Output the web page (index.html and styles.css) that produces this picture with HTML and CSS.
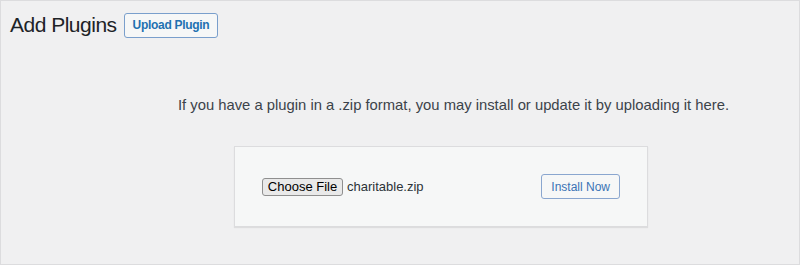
FILE: index.html
```html
<!DOCTYPE html>
<html lang="en">
  <head>
    <meta charset="UTF-8" />
    <meta name="viewport" content="width=device-width, initial-scale=1.0" />
    <title>Add Plugins</title>
    <link rel="stylesheet" href="styles.css">
  </head>
  <body>
    <div class="wrap">
      <!-- page title -->
      <div class="page-head">
        <h1 class="page-title">Add Plugins</h1>
        <button type="button" class="btn btn-strong">Upload Plugin</button>
      </div>
      <!-- upload box -->
      <div class="upload-plugin">
        <p class="install-help">If you have a plugin in a .zip format, you may install or update it by uploading it here.</p>
        <form class="upload-form">
          <div class="file-field">
            <button type="button" class="file-btn">Choose File</button>
            <span class="file-name">charitable.zip</span>
          </div>
          <button type="button" class="btn">Install Now</button>
        </form>
      </div>
    </div>
  </body>
</html>
```

FILE: styles.css
```css
body {
  margin: 0;
  font-family: "Liberation Sans", Arial, sans-serif;
  color: #3c434a;
}

.wrap {
  box-sizing: border-box;
  width: 800px;
  height: 265px;
  border: 1px solid #dcdcde;
  background-color: #f0f0f1;
  padding-top: 9px;
}

/* title row */
.page-head {
  display: flex;
  align-items: center;
  gap: 7px;
  padding-left: 9px;
}

.page-title {
  margin: 0;
  font-size: 21px;
  font-weight: 400;
  letter-spacing: -0.5px;
  line-height: 30px;
  color: #1d2327;
}

.btn {
  box-sizing: border-box;
  height: 25px;
  padding: 0 9px;
  font-family: inherit;
  font-size: 12px;
  color: #3a73b5;
  background-color: #f6f7f7;
  border: 1px solid #8aa6cf;
  border-radius: 3px;
}

.btn-strong {
  padding: 0 8px;
  font-weight: 600;
  letter-spacing: -0.3px;
  color: #2271b1;
  border-color: #7a9fcc;
}

/* upload section */
.upload-plugin {
  margin-top: 55px;
}

.install-help {
  margin: 0 0 0 107px;
  font-size: 14.8px;
  line-height: 20px;
  text-align: center;
}

.upload-form {
  box-sizing: border-box;
  width: 414px;
  margin: 31px 0 0 233px;
  padding: 27px;
  display: flex;
  justify-content: space-between;
  align-items: center;
  background-color: #f6f7f7;
  border: 1px solid #dcdcde;
  box-shadow: 0 1px 1px rgba(0, 0, 0, 0.08);
}

.file-field {
  display: flex;
  align-items: center;
  gap: 4px;
}

.file-btn {
  box-sizing: border-box;
  width: 81px;
  height: 18px;
  padding: 0;
  font-family: inherit;
  font-size: 13px;
  color: #000;
  background-color: #e9e9e9;
  border: 1px solid #8f8f8f;
  border-radius: 3px;
}

.file-name {
  font-size: 13px;
  color: #2c3338;
}
```
